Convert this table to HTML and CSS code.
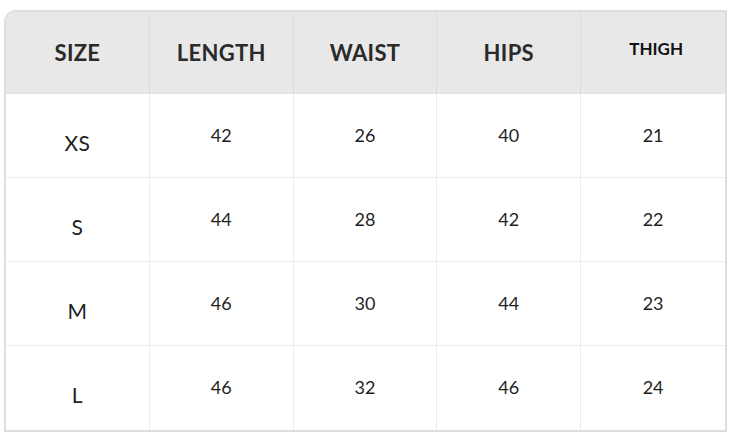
FILE: index.html
```html
<!DOCTYPE html>
<html lang="en">
<head>
<meta charset="utf-8">
<title>Size chart</title>
<link rel="stylesheet" href="styles.css">
</head>
<body>
<div class="chart">
  <div class="cell head">SIZE</div>
  <div class="cell head">LENGTH</div>
  <div class="cell head">WAIST</div>
  <div class="cell head">HIPS</div>
  <div class="cell head small">THIGH</div>

  <div class="cell size">XS</div>
  <div class="cell num">42</div>
  <div class="cell num">26</div>
  <div class="cell num">40</div>
  <div class="cell num">21</div>

  <div class="cell size">S</div>
  <div class="cell num">44</div>
  <div class="cell num">28</div>
  <div class="cell num">42</div>
  <div class="cell num">22</div>

  <div class="cell size">M</div>
  <div class="cell num">46</div>
  <div class="cell num">30</div>
  <div class="cell num">44</div>
  <div class="cell num">23</div>

  <div class="cell size">L</div>
  <div class="cell num">46</div>
  <div class="cell num">32</div>
  <div class="cell num">46</div>
  <div class="cell num">24</div>
</div>
</body>
</html>
```
FILE: styles.css
```css
html, body {
  margin: 0;
  padding: 0;
  background: #ffffff;
}
body {
  padding: 10px 0 0 4px;
  font-family: Lato, "Liberation Sans", sans-serif;
  color: #1f1f1f;
}
.chart {
  width: 723px;
  box-sizing: border-box;
  border: 2px solid #dedede;
  border-top-left-radius: 12px;
  overflow: hidden;
  display: grid;
  grid-template-columns: repeat(5, 1fr);
  grid-template-rows: 82px repeat(4, 84px);
}
.cell {
  display: flex;
  align-items: center;
  justify-content: center;
  border-right: 1px solid #ececec;
  border-bottom: 1px solid #ececec;
}
.cell:nth-child(5n) {
  border-right: none;
}
.cell:nth-last-child(-n+5) {
  border-bottom: none;
}
.head {
  background: #e8e8e8;
  border-right-color: #dcdcdc;
  border-bottom-color: #e2e2e2;
  font-weight: 700;
  font-size: 22px;
  letter-spacing: 0.3px;
  color: #2a2a2a;
  padding-bottom: 0;
}
.head.small {
  font-size: 17px;
  letter-spacing: 0;
  color: #111;
  padding-bottom: 8px;
  padding-left: 6px;
}
.size {
  font-size: 21px;
  letter-spacing: 0.5px;
  padding-top: 13px;
}
.num {
  font-size: 18px;
  padding-bottom: 2px;
}
```
